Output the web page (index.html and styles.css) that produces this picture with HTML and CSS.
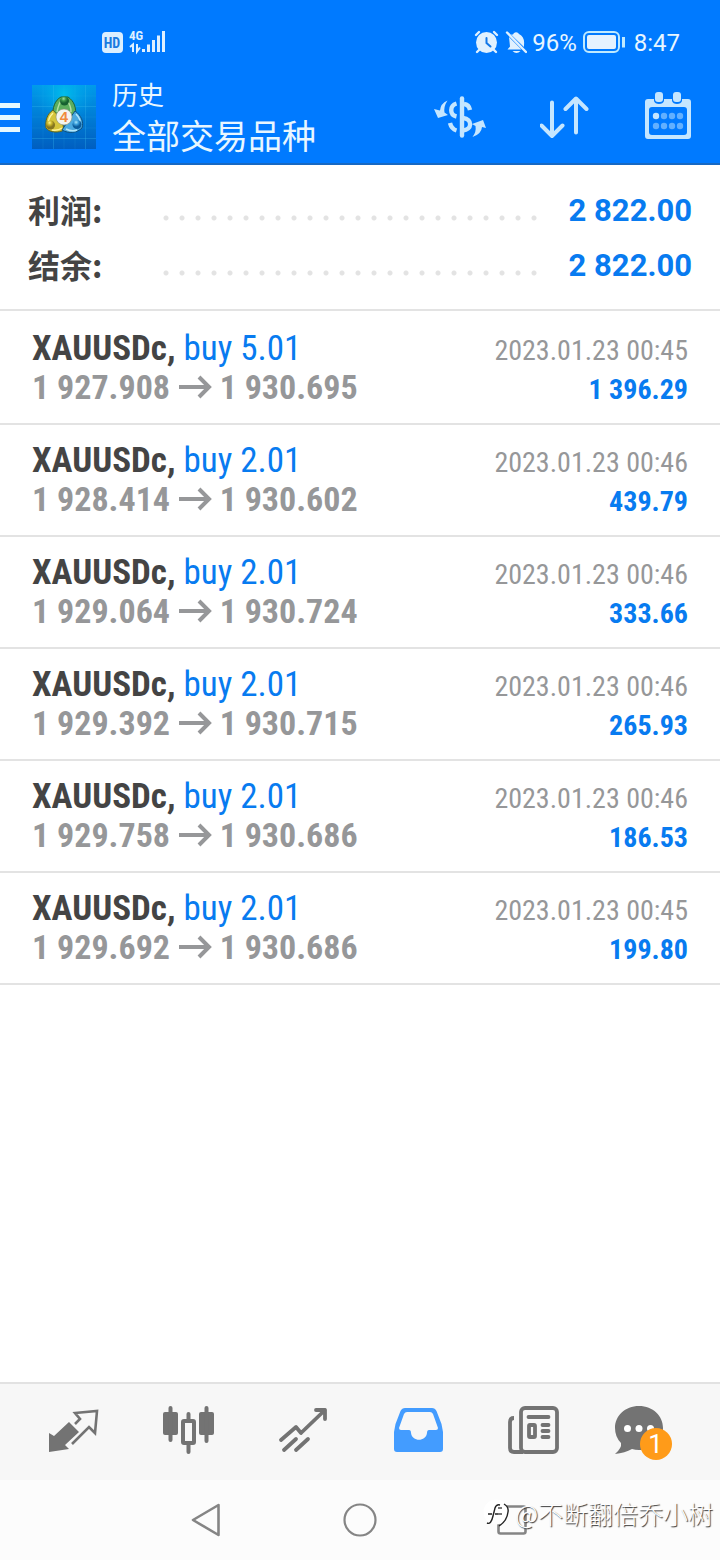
FILE: index.html
```html
<!DOCTYPE html>
<html lang="zh-CN">
<head>
<meta charset="utf-8">
<meta name="viewport" content="width=device-width, initial-scale=1">
<title>历史</title>
<link rel="stylesheet" href="styles.css">
</head>
<body>
<div class="app">
  <header class="top">
    <div class="status">
      <svg class="status-signal" width="66" height="28" viewBox="100 28 66 28" aria-label="HD 4G">
        <rect x="102" y="32" width="21" height="21" rx="4" fill="#dcefff"/>
        <text x="112" y="48" class="hd-text">HD</text>
        <text x="129" y="40" class="net-text">4G</text>
        <path d="M130 47l3-2.500v7.500M137 44v7.500l3-4" fill="none" stroke="#dff0ff" stroke-width="2"/>
        <path d="M143.500 52v-3M148.500 52v-7.500M153.500 52v-12M158.500 52v-16.500M163.500 52v-21" stroke="#dff0ff" stroke-width="3" fill="none"/>
      </svg>
      <div class="status-right">
        <svg width="54" height="26" viewBox="473 28 54 26" aria-hidden="true">
          <g stroke="#e0f1ff" fill="none" stroke-width="2.400" stroke-linecap="round">
            <path d="M476 34l3-3M497 34l-3-3M479 49l-2 2M494 49l2 2"/>
            <circle cx="486.500" cy="41.500" r="10.500" fill="#e0f1ff" stroke="none"/>
            <path d="M486.500 37v5l4 3.500" stroke="#1278e8" stroke-width="2"/>
            <path d="M513 33.500a3.200 3.200 0 0 1 6-.5q6 3 5 11v2l-13-12.500zM509 36l12.500 12.500h-14l2.500-3zM512.500 50h8q-4 4-8 0z" fill="#e0f1ff" stroke="none"/>
            <path d="M507 31.500l19 19.500"/>
          </g>
        </svg>
        <span class="status-battery">96%</span>
        <svg width="44" height="24" viewBox="582 30 44 24" aria-hidden="true">
          <rect x="584" y="32" width="35" height="20" rx="5" fill="none" stroke="#bfeaff" stroke-width="2"/>
          <rect x="587" y="35" width="29" height="14" rx="2" fill="#e4f2ff"/>
          <path d="M623.500 37v10.500" stroke="#bfeaff" stroke-width="3"/>
        </svg>
        <span class="status-time">8:47</span>
      </div>
    </div>
    <div class="bar">
      <button class="menu" aria-label="菜单"><span></span><span></span><span></span></button>
      <svg class="logo" width="64" height="64" viewBox="32 85 64 64" aria-label="MetaTrader 4">
        <defs>
          <linearGradient id="bg" x1="0" y1="0" x2="0" y2="1"><stop offset="0" stop-color="#009be9"/><stop offset="1" stop-color="#005ec0"/></linearGradient>
          <radialGradient id="glow"><stop offset="0" stop-color="#00c8ed" stop-opacity=".8"/><stop offset="1" stop-color="#00a5ed" stop-opacity="0"/></radialGradient>
          <radialGradient id="green" cx=".4" cy=".25"><stop offset="0" stop-color="#a5dca0"/><stop offset=".5" stop-color="#3b9648"/><stop offset="1" stop-color="#166030"/></radialGradient>
          <radialGradient id="gold" cx=".4" cy=".25"><stop offset="0" stop-color="#fff68f"/><stop offset=".5" stop-color="#c9b52a"/><stop offset="1" stop-color="#857520"/></radialGradient>
          <radialGradient id="blue" cx=".4" cy=".25"><stop offset="0" stop-color="#a8e6fb"/><stop offset=".5" stop-color="#3b9fdc"/><stop offset="1" stop-color="#0b5c9c"/></radialGradient>
        </defs>
        <path fill="url(#bg)" d="M32 85h64v64H32z"/>
        <circle cx="64" cy="94" r="30" fill="url(#glow)"/>
        <path d="M53.500 85v64M85.500 85v64M32 106.500h64M32 138.500h64" stroke="#39bdf0" stroke-opacity=".3" fill="none"/>
        <path d="M43 85v64M64 85v64M75 85v64M32 96h64M32 117h64M32 128h64" stroke="#39bdf0" stroke-opacity=".12" fill="none"/>
        <path d="M53 117c-1-9 2-17 8-20h7c6 4 9 11 7 20l-11 2z" fill="#5cae5e" stroke="#1f6236"/>
        <path d="M57 112c1-6 2-9 5-12M71 112c0-5-1-8-4-11" fill="none" stroke="#b3e0a0" stroke-width="1.500"/>
        <path d="M53 110c-6 4-8 11-7 18 4 5 13 5 18 2l-2-10z" fill="#d5c53c" stroke="#5f6521"/>
        <path d="M53 113c-4 4-5 8-4 11M52 130q6 1 10-2" fill="none" stroke="#fff39a" stroke-width="1.500"/>
        <path d="M75 111c6 4 9 11 7 17-5 5-13 6-20 2l6-9z" fill="#4ba9e0" stroke="#0f5180"/>
        <path d="M76 114c3 3 5 7 4 11M66 129q6 3 11 1" fill="none" stroke="#b5e7fa" stroke-width="1.500"/>
        <circle cx="64.500" cy="101" r="4.500" fill="url(#green)"/>
        <circle cx="50.500" cy="125" r="4.500" fill="url(#gold)"/>
        <circle cx="77" cy="124.500" r="4.500" fill="url(#blue)"/>
        <circle cx="64" cy="117" r="8" fill="#f3f4ef" stroke="#8b9070" stroke-width=".6"/>
        <text x="64" y="122" class="logo-text">4</text>
      </svg>
      <div class="titles"><h1>历史</h1><p>全部交易品种</p></div>
      <div class="actions">
        <button aria-label="货币">
          <svg width="54" height="48" viewBox="432 92 54 48">
            <g fill="none" stroke="#c5e6ff" stroke-width="4.400">
              <path d="M462 97.500v37" stroke-linecap="round"/>
              <path d="M456.500 102.500c-7 2-7 11.500 0 13M464 103q5 .5 6 6M456.500 129.500q-5-1.500-6.500-7.500M463 117c10 1 9 12 0 12.500"/>
            </g>
            <path d="M447.500 99.500q-7 3-7.500 10l-6-1.500 4 9 10-3-3.500-2.500q-1-6 3-12zM472.500 136q9-3 9.500-10l4 1-3-8-11 4 3.500 2q1 6-3 11z" fill="#c5e6ff"/>
          </svg>
        </button>
        <button aria-label="排序">
          <svg width="50" height="48" viewBox="540 92 50 48"><path d="M552 101.500v33M541.500 124.500l10.500 10.500 10.500-10.500M576 131.500v-33M565.500 108l10.500-10.500 10.500 10.500" fill="none" stroke="#c5e6ff" stroke-width="4" stroke-linecap="round" stroke-linejoin="round"/></svg>
        </button>
        <button aria-label="日期">
          <svg width="48" height="50" viewBox="644 92 48 50">
            <path fill-rule="evenodd" d="M648 99h6v2q1 3 5 3t5-3v-2h8v2q1 3 5 3t5-3v-2h6q3 0 3 3v34q0 3-3 3h-40q-3 0-3-3v-34q0-3 3-3zM652 107q-3 0-3 3v22q0 3 3 3h32q3 0 3-3v-22q0-3-3-3z" fill="#c5e6ff"/>
            <rect x="655" y="92" width="8" height="10" rx="3" fill="#c5e6ff"/><rect x="673" y="92" width="8" height="10" rx="3" fill="#c5e6ff"/>
            <circle cx="656" cy="116" r="3.200" fill="#c5e6ff"/>
            <g fill="#62b0ff"><circle cx="664" cy="116" r="3.200"/><circle cx="672" cy="116" r="3.200"/><circle cx="680" cy="116" r="3.200"/><circle cx="656" cy="126" r="3.200"/><circle cx="664" cy="126" r="3.200"/><circle cx="672" cy="126" r="3.200"/><circle cx="680" cy="126" r="3.200"/></g>
          </svg>
        </button>
      </div>
    </div>
  </header>

  <main class="content">
    <dl class="summary">
      <div class="total"><dt>利润:</dt><dd>2 822.00</dd></div>
      <div class="total"><dt>结余:</dt><dd>2 822.00</dd></div>
    </dl>
    <ul class="deals">
      <li class="deal"><p class="name"><b>XAUUSDc,</b> <span>buy 5.01</span></p><time>2023.01.23 00:45</time><p class="prices">1 927.908 <svg class="arrow" viewBox="0 0 34 24"><path d="M1 12h30M21 2l10 10-10 10"/></svg> 1 930.695</p><p class="profit">1 396.29</p></li>
      <li class="deal"><p class="name"><b>XAUUSDc,</b> <span>buy 2.01</span></p><time>2023.01.23 00:46</time><p class="prices">1 928.414 <svg class="arrow" viewBox="0 0 34 24"><path d="M1 12h30M21 2l10 10-10 10"/></svg> 1 930.602</p><p class="profit">439.79</p></li>
      <li class="deal"><p class="name"><b>XAUUSDc,</b> <span>buy 2.01</span></p><time>2023.01.23 00:46</time><p class="prices">1 929.064 <svg class="arrow" viewBox="0 0 34 24"><path d="M1 12h30M21 2l10 10-10 10"/></svg> 1 930.724</p><p class="profit">333.66</p></li>
      <li class="deal"><p class="name"><b>XAUUSDc,</b> <span>buy 2.01</span></p><time>2023.01.23 00:46</time><p class="prices">1 929.392 <svg class="arrow" viewBox="0 0 34 24"><path d="M1 12h30M21 2l10 10-10 10"/></svg> 1 930.715</p><p class="profit">265.93</p></li>
      <li class="deal"><p class="name"><b>XAUUSDc,</b> <span>buy 2.01</span></p><time>2023.01.23 00:46</time><p class="prices">1 929.758 <svg class="arrow" viewBox="0 0 34 24"><path d="M1 12h30M21 2l10 10-10 10"/></svg> 1 930.686</p><p class="profit">186.53</p></li>
      <li class="deal"><p class="name"><b>XAUUSDc,</b> <span>buy 2.01</span></p><time>2023.01.23 00:45</time><p class="prices">1 929.692 <svg class="arrow" viewBox="0 0 34 24"><path d="M1 12h30M21 2l10 10-10 10"/></svg> 1 930.686</p><p class="profit">199.80</p></li>
    </ul>
  </main>

  <nav class="tabs">
    <button aria-label="行情">
      <svg width="52" height="52" viewBox="48 1404 52 52"><path d="M49 1433l5 3 15-14 10 10-14 13 4 4-20 3z" fill="#737373"/><path d="M75 1424l5-5-5-6 22-2-2 22-6-6-17 17" fill="none" stroke="#737373" stroke-width="2.600"/></svg>
    </button>
    <button aria-label="图表">
      <svg width="52" height="52" viewBox="163 1404 52 52"><g fill="#737373"><rect x="163" y="1412" width="15" height="23" rx="2"/><rect x="199" y="1412" width="15" height="23" rx="2"/></g><path d="M170.500 1408v32M206.500 1408v33M188.500 1414v6M188.500 1445v7" stroke="#737373" stroke-width="4" stroke-linecap="round"/><rect x="183" y="1421" width="11" height="22" rx="1" fill="none" stroke="#737373" stroke-width="4"/></svg>
    </button>
    <button aria-label="交易">
      <svg width="52" height="52" viewBox="278 1404 52 52"><path d="M281 1440l15-13 5 6 24-23M316 1410h9v9M284 1450l12-11M296 1450l12-11" fill="none" stroke="#737373" stroke-width="3.800" stroke-linecap="round" stroke-linejoin="round"/></svg>
    </button>
    <button aria-label="历史">
      <svg width="52" height="52" viewBox="393 1404 52 52"><path fill-rule="evenodd" d="M405 1408h27q3 0 4.500 3l5 13 1.500 8v17q0 3-3 3h-43q-3 0-3-3v-17l1.500-8 5-13q1.500-3 4.500-3zM407 1412q-2 0-3 2l-5 14q0 2 2 2h8q2 0 2 3c1 9 15 9 16 0q0-3 2-3h7q2 0 2-2l-5-14q-1-2-3-2z" fill="#439cff"/></svg>
    </button>
    <button aria-label="新闻">
      <svg width="52" height="52" viewBox="508 1404 52 52"><g fill="none" stroke="#737373" stroke-width="3.800"><rect x="521" y="1408" width="36" height="44" rx="4"/><path d="M514 1418q-4 0-4 4v26q0 4 4 4h9"/><path d="M528.500 1417h20M542.500 1425h6M542.500 1431h6M542.500 1437h6" stroke-linecap="round"/><rect x="529" y="1425" width="6" height="12" rx="1"/></g></svg>
    </button>
    <button aria-label="消息">
      <span class="chat">
        <svg width="72" height="52" viewBox="613 1404 72 52"><path d="M639 1406c14 0 24 10 24 22s-10 22-24 22q-4 0-7-1-7 4-17 5 7-6 6-11-6-6-6-15c0-12 10-22 24-22z" fill="#737373"/><g fill="#fff"><circle cx="627.500" cy="1428.500" r="3.500"/><circle cx="639" cy="1428.500" r="3.500"/><circle cx="650.500" cy="1428.500" r="3.500"/></g></svg>
        <span class="badge">1</span>
      </span>
    </button>
  </nav>

  <footer class="system">
    <button aria-label="返回"><svg width="34" height="40" viewBox="190 1500 34 40"><path d="M218.500 1505v30L193 1520z" fill="none" stroke="#858585" stroke-width="2.600" stroke-linejoin="round"/></svg></button>
    <button aria-label="主页"><svg width="34" height="40" viewBox="343 1500 34 40"><circle cx="360" cy="1520" r="15.500" fill="none" stroke="#858585" stroke-width="2.200"/></svg></button>
    <button aria-label="最近任务"><svg width="34" height="40" viewBox="496 1500 34 40"><rect x="498.500" y="1506.500" width="27" height="27" rx="2" fill="none" stroke="#858585" stroke-width="2.600"/></svg></button>
    <div class="watermark">
      <svg width="28" height="28" viewBox="483 1502 28 28" aria-hidden="true"><circle cx="496" cy="1515" r="12.500" fill="#fff"/><path d="M487 1526q4 2 6-7l2-8q1-4 5-3M488 1517h4M495 1517h3M504 1507q5 3 4 8-1 9-9 14" fill="none" stroke="#222" stroke-width="1.400"/><path d="M498 1511h4M498 1517h4" stroke="#777" stroke-width="2"/></svg>
      <span>@不断翻倍乔小树</span>
    </div>
  </footer>
</div>
</body>
</html>
```
FILE: styles.css
```css
* { box-sizing: border-box; }
body, h1, p, dl, dd, ul { margin: 0; padding: 0; }
body { background: #fff; color: #444; font-family: Roboto, "Noto Sans CJK SC", sans-serif; }
button { border: 0; padding: 0; background: none; font: inherit; }
svg { display: block; flex: none; }
.app { min-height: 100vh; display: flex; flex-direction: column; }

.top { background: #007aff; border-bottom: 2px solid #1769c3; color: #e8f6ff; }
.status { display: flex; justify-content: space-between; align-items: center; padding: 28px 40px 0 100px; }
.status-right { display: flex; align-items: center; gap: 5px; font-size: 24px; line-height: 28px; }
.status-battery, .status-time { padding-top: 2px; line-height: 26px; }
.status-time { margin-left: 3px; }
.hd-text { font: 700 14px "Roboto Condensed", sans-serif; fill: #1b7be0; text-anchor: middle; }
.net-text { font: 700 13px "Roboto Condensed", sans-serif; fill: #dff0ff; }
.bar { display: flex; align-items: center; padding: 22px 28px 7px 0; }
.menu { display: flex; flex-direction: column; gap: 7px; width: 20px; }
.menu span { height: 5px; background: #e5f8ff; }
.logo { margin: 0 16px 0 12px; }
.logo-text { font: 700 15px "Liberation Sans", sans-serif; fill: #f08a3c; text-anchor: middle; }
.titles h1 { font-size: 26px; font-weight: 400; line-height: 36px; }
.titles p { padding-top: 4px; font-size: 34px; line-height: 38px; }
.actions { display: flex; align-items: center; gap: 54px; margin-left: auto; }

.content { flex: 1; }
.summary { padding: 18px 28px 16px; border-bottom: 2px solid #e3e3e3; }
.total { display: flex; align-items: center; height: 55px; font-size: 32px; font-weight: 700; line-height: 54px; }
.total dt { width: 130px; padding-bottom: 4px; font-family: "Noto Sans CJK SC", sans-serif; line-height: 50px; }
.total::after { content: ""; order: 1; flex: 1; height: 16px; margin: 14px 24px 0 0; background: radial-gradient(circle, #e3e3e3 2px, transparent 3px) 0 0 / 16px 16px repeat-x; }
.total dd { order: 2; width: 126px; color: #087bf0; font-size: 31px; line-height: 54px; text-align: right; }
.deals { list-style: none; padding-top: 2px; }
.deal { display: grid; grid-template-columns: 1fr auto; padding: 16px 32px; border-bottom: 2px solid #e3e3e3; font-family: "Roboto Condensed", "Liberation Sans Narrow", Roboto, sans-serif; line-height: 39px; }
.name { font-size: 35px; }
.name span { color: #087bf0; }
.prices { color: #969799; font-size: 34px; font-weight: 700; }
.arrow { display: inline-block; width: 34px; height: 24px; fill: none; stroke: #969799; stroke-width: 4; }
.deal time { padding-top: 4px; line-height: 35px; color: #969799; font-size: 28px; text-align: right; }
.profit { padding-top: 4px; line-height: 35px; color: #087bf0; font-size: 28px; font-weight: 700; text-align: right; }

.tabs { display: flex; padding: 20px 14px 24px 16px; background: #f7f7f7; border-top: 2px solid #e2e2e2; }
.tabs button { flex: 1; display: flex; justify-content: center; }
.chat { position: relative; }
.badge { position: absolute; right: 13px; bottom: -4px; width: 32px; height: 32px; border-radius: 50%; background: #ff9b19; color: #fff; font-size: 26px; line-height: 32px; text-align: center; }
.system { position: relative; display: flex; justify-content: center; gap: 119px; padding: 20px 0; background: #fcfcfc; }
.watermark { position: absolute; right: 7px; bottom: 31px; display: flex; align-items: center; gap: 4px; font-family: "Noto Sans CJK SC", sans-serif; font-size: 25px; font-weight: 300; line-height: 32px; color: #fff; text-shadow: 1px 1px 1px #333; }
```
